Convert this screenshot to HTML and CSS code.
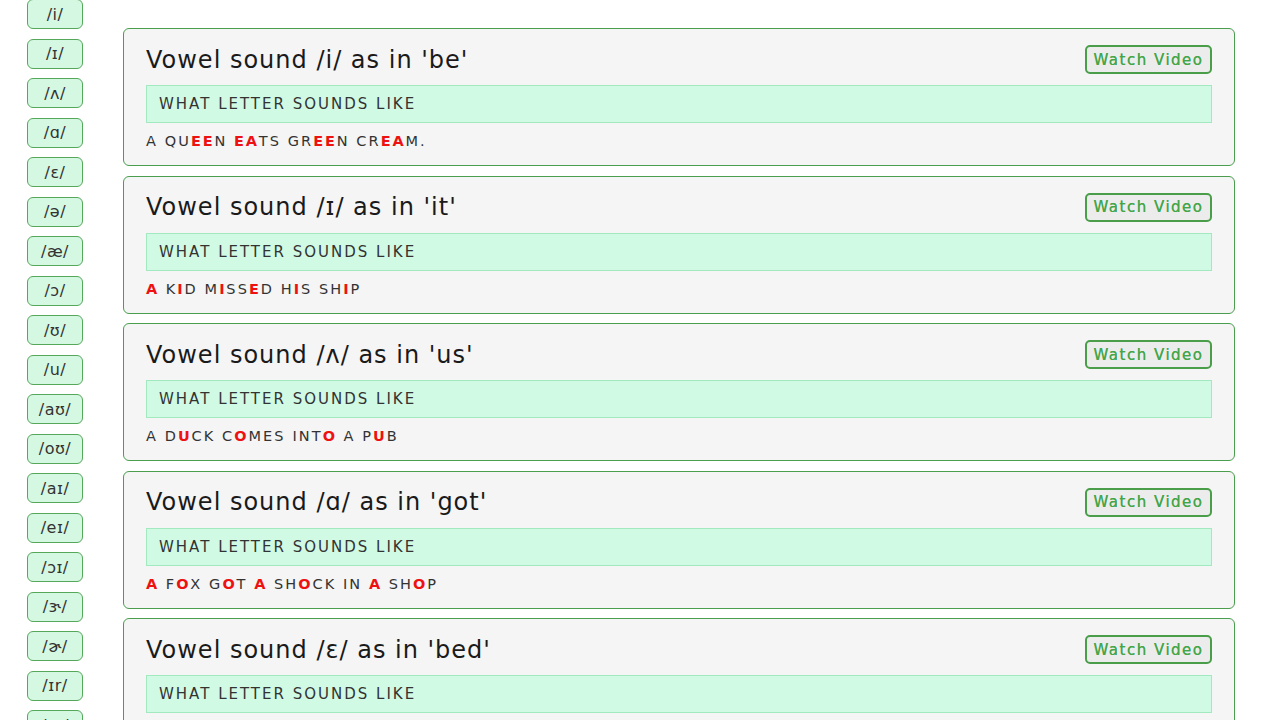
FILE: index.html
```html
<!DOCTYPE html>
<html lang="en">
<head>
<meta charset="utf-8">
<title>Vowel sounds</title>
<link rel="stylesheet" href="styles.css">
</head>
<body>
<div class="page">
  <nav class="sidebar">
    <a class="sound-btn">/i/</a>
    <a class="sound-btn">/ɪ/</a>
    <a class="sound-btn">/ʌ/</a>
    <a class="sound-btn">/ɑ/</a>
    <a class="sound-btn">/ɛ/</a>
    <a class="sound-btn">/ə/</a>
    <a class="sound-btn">/æ/</a>
    <a class="sound-btn">/ɔ/</a>
    <a class="sound-btn">/ʊ/</a>
    <a class="sound-btn">/u/</a>
    <a class="sound-btn">/aʊ/</a>
    <a class="sound-btn">/oʊ/</a>
    <a class="sound-btn">/aɪ/</a>
    <a class="sound-btn">/eɪ/</a>
    <a class="sound-btn">/ɔɪ/</a>
    <a class="sound-btn">/ɝ/</a>
    <a class="sound-btn">/ɚ/</a>
    <a class="sound-btn">/ɪr/</a>
    <a class="sound-btn">/ɛr/</a>
  </nav>
  <main class="content">
    <section class="card">
      <div class="card-head">
        <h2 class="card-title">Vowel sound /i/ as in 'be'</h2>
        <button class="video-btn">Watch Video</button>
      </div>
      <div class="letters">WHAT LETTER SOUNDS LIKE</div>
      <p class="sentence">A QU<b>EE</b>N <b>EA</b>TS GR<b>EE</b>N CR<b>EA</b>M.</p>
    </section>
    <section class="card">
      <div class="card-head">
        <h2 class="card-title">Vowel sound /ɪ/ as in 'it'</h2>
        <button class="video-btn">Watch Video</button>
      </div>
      <div class="letters">WHAT LETTER SOUNDS LIKE</div>
      <p class="sentence"><b>A</b> K<b>I</b>D M<b>I</b>SS<b>E</b>D H<b>I</b>S SH<b>I</b>P</p>
    </section>
    <section class="card">
      <div class="card-head">
        <h2 class="card-title">Vowel sound /ʌ/ as in 'us'</h2>
        <button class="video-btn">Watch Video</button>
      </div>
      <div class="letters">WHAT LETTER SOUNDS LIKE</div>
      <p class="sentence">A D<b>U</b>CK C<b>O</b>MES INT<b>O</b> A P<b>U</b>B</p>
    </section>
    <section class="card">
      <div class="card-head">
        <h2 class="card-title">Vowel sound /ɑ/ as in 'got'</h2>
        <button class="video-btn">Watch Video</button>
      </div>
      <div class="letters">WHAT LETTER SOUNDS LIKE</div>
      <p class="sentence"><b>A</b> F<b>O</b>X G<b>O</b>T <b>A</b> SH<b>O</b>CK IN <b>A</b> SH<b>O</b>P</p>
    </section>
    <section class="card">
      <div class="card-head">
        <h2 class="card-title">Vowel sound /ɛ/ as in 'bed'</h2>
        <button class="video-btn">Watch Video</button>
      </div>
      <div class="letters">WHAT LETTER SOUNDS LIKE</div>
      <p class="sentence">A R<b>E</b>D H<b>E</b>N F<b>E</b>LL ON TH<b>E</b> B<b>E</b>D</p>
    </section>
  </main>
</div>
</body>
</html>
```
FILE: styles.css
```css
html, body {
  margin: 0;
  padding: 0;
  background: #ffffff;
  overflow: hidden;
  height: 720px;
}
body {
  font-family: "DejaVu Sans", "Noto Sans", sans-serif;
  color: #222;
}
.page {
  display: flex;
  align-items: flex-start;
  gap: 40px;
  padding-left: 27px;
}
.sidebar {
  display: flex;
  flex-direction: column;
  gap: 9.5px;
  width: 56px;
  flex: 0 0 56px;
  margin-top: -1px;
}
.sound-btn {
  box-sizing: border-box;
  display: flex;
  align-items: center;
  justify-content: center;
  height: 30px;
  flex: 0 0 30px;
  border: 1.5px solid #55a85a;
  border-radius: 6px;
  background: #d5f8e2;
  color: #333;
  font-size: 16px;
  letter-spacing: 0.5px;
  cursor: pointer;
}
.content {
  width: 1112px;
  display: flex;
  flex-direction: column;
  gap: 9.5px;
  padding-top: 28px;
}
.card {
  background: #f5f5f5;
  border: 1.5px solid #4a9e4e;
  border-radius: 6px;
  padding: 16px 22px 16px 22px;
  height: 138px;
  box-sizing: border-box;
}
.card-head {
  display: flex;
  justify-content: space-between;
  align-items: center;
  height: 29px;
}
.card-title {
  margin: 0;
  font-weight: 400;
  font-size: 24px;
  color: #1a1a1a;
  letter-spacing: 1px;
}
.video-btn {
  font-family: inherit;
  height: 29px;
  width: 127px;
  padding: 0;
  border: 2px solid #4a9e4a;
  border-radius: 5px;
  background: #ececec;
  color: #45a649;
  font-size: 15px;
  letter-spacing: 1.5px;
  text-shadow: 0 0 0.3px #45a649;
}
.letters {
  margin-top: 11px;
  height: 36px;
  display: flex;
  align-items: center;
  padding-left: 12px;
  background: #d1fae5;
  border: 1px solid #a3e9bf;
  font-size: 15px;
  color: #333;
  letter-spacing: 2px;
}
.sentence {
  margin: 10px 0 0 0;
  font-size: 14.5px;
  color: #333;
  letter-spacing: 2.1px;
}
.sentence b {
  color: #ee1111;
  font-weight: 700;
  letter-spacing: 1.8px;
}
```
